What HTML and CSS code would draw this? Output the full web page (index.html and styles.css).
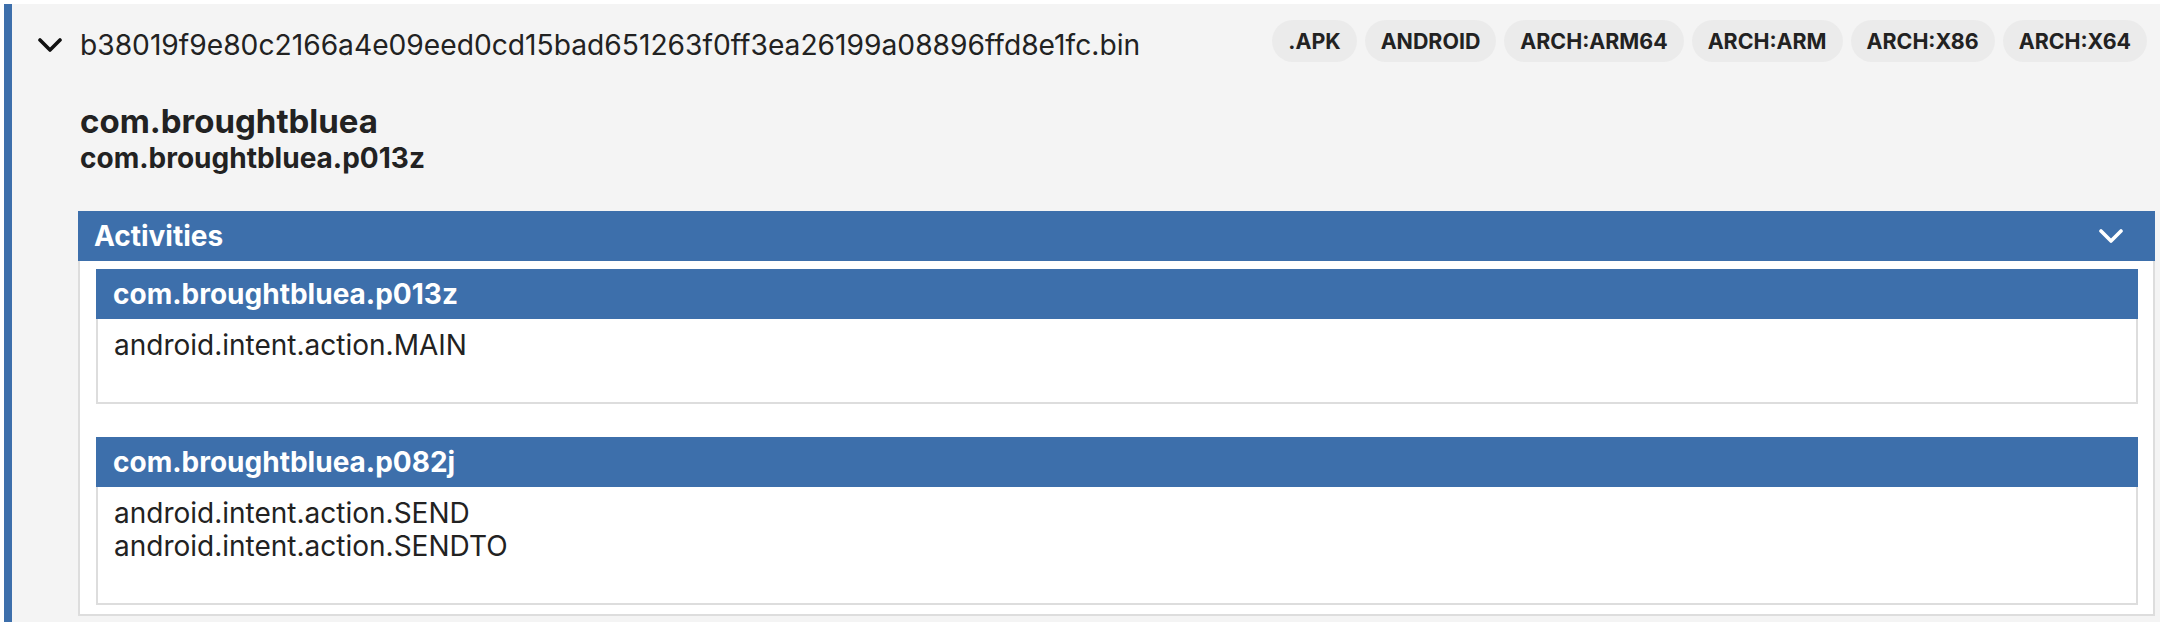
FILE: index.html
```html
<!DOCTYPE html>
<html>
<head>
<meta charset="utf-8">
<link rel="stylesheet" href="styles.css">
</head>
<body>
<div class="item">
  <div class="item-head">
    <div class="title">
      <svg class="chev" width="24" height="14" viewBox="0 0 24 14"><path d="M2 2 L12 12 L22 2" fill="none" stroke="#111" stroke-width="3.6" stroke-linecap="round" stroke-linejoin="round"/></svg>
      <span class="hash">b38019f9e80c2166a4e09eed0cd15bad651263f0ff3ea26199a08896ffd8e1fc.bin</span>
    </div>
    <div class="badges">
      <span class="badge">.APK</span>
      <span class="badge">ANDROID</span>
      <span class="badge">ARCH:ARM64</span>
      <span class="badge">ARCH:ARM</span>
      <span class="badge">ARCH:X86</span>
      <span class="badge">ARCH:X64</span>
    </div>
  </div>
  <div class="item-body">
    <h1 class="app-name">com.broughtbluea</h1>
    <h2 class="pkg-name">com.broughtbluea.p013z</h2>
    <div class="panel">
      <div class="panel-head">
        <span>Activities</span>
        <svg class="chev-white" width="24" height="14" viewBox="0 0 24 14"><path d="M2 2 L12 12 L22 2" fill="none" stroke="#fff" stroke-width="3.6" stroke-linecap="round" stroke-linejoin="round"/></svg>
      </div>
      <div class="panel-body">
        <div class="card">
          <div class="card-head">com.broughtbluea.p013z</div>
          <div class="card-body">
            <div class="line">android.intent.action.MAIN</div>
          </div>
        </div>
        <div class="card">
          <div class="card-head">com.broughtbluea.p082j</div>
          <div class="card-body">
            <div class="line">android.intent.action.SEND</div>
            <div class="line">android.intent.action.SENDTO</div>
          </div>
        </div>
      </div>
    </div>
  </div>
</div>
</body>
</html>
```

FILE: styles.css
```css
html, body {
  margin: 0;
  padding: 0;
  background: #ffffff;
}
body {
  padding: 4px 0 0 4px;
  font-family: Inter, "Noto Sans", sans-serif;
  color: #222222;
}
.item {
  background: #f4f4f4;
  border-left: 8px solid #3d6fab;
  min-height: 640px;
}
.item-head {
  display: flex;
  align-items: center;
  justify-content: space-between;
  padding: 16px 13px 0 26px;
}
.title {
  display: flex;
  align-items: center;
  gap: 18px;
  padding-top: 8px;
}
.chev {
  display: block;
  flex: none;
}
.hash {
  font-size: 28.2px;
  line-height: 33px;
  font-weight: 400;
  color: #222;
}
.badges {
  display: flex;
  gap: 8px;
}
.badge {
  display: flex;
  align-items: center;
  height: 42px;
  padding: 0 16px;
  border-radius: 21px;
  background: #ebebeb;
  font-size: 21.4px;
  font-weight: 700;
  color: #222;
}
.item-body {
  padding: 40px 5px 0 66px;
}
.app-name {
  margin: 0;
  font-size: 33px;
  line-height: 39.6px;
  font-weight: 700;
  padding-left: 2px;
}
.pkg-name {
  margin: 0;
  font-size: 28px;
  line-height: 33px;
  font-weight: 700;
  padding-left: 2px;
}
.panel {
  margin-top: 36px;
}
.panel-head {
  display: flex;
  align-items: center;
  justify-content: space-between;
  height: 50px;
  padding: 0 32px 0 16px;
  background: #3d6fab;
  color: #ffffff;
  font-size: 28px;
  font-weight: 700;
}
.chev-white {
  display: block;
}
.panel-body {
  background: #ffffff;
  border: 2px solid #dddddd;
  border-top: none;
  padding: 8px 15px 9px 16px;
  display: flex;
  flex-direction: column;
  gap: 33px;
}
.card-head {
  height: 50px;
  display: flex;
  align-items: center;
  padding: 0 17px;
  background: #3d6fab;
  color: #ffffff;
  font-size: 28px;
  font-weight: 700;
}
.card-body {
  border: 2px solid #dddddd;
  border-top: none;
  padding: 10px 16px 40px;
  background: #ffffff;
}
.line {
  font-size: 28px;
  line-height: 33px;
  color: #222;
}
```
